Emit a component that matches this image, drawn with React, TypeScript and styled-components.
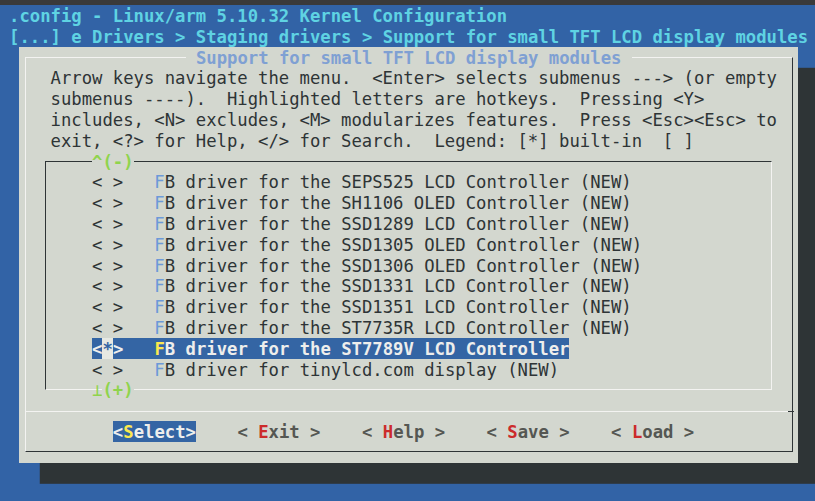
import React from 'react'
import styled, { createGlobalStyle } from 'styled-components'

// terminal cell size (80x24 grid, cropped)
const CW = 10.38
const RH = 20.8
// glyphs sit a little low in the terminal's cells
const LH = RH + 3

const BLUE = '#3263a6'
const PANEL = '#d3d7cf'
const INK = '#2e3436'
const LIGHT = '#f3f3f1'

const GlobalStyle = createGlobalStyle`
  html, body {
    margin: 0;
    padding: 0;
    background: ${BLUE};
    overflow: hidden;
  }
`

const Screen = styled.div`
  width: 815px;
  height: 501px;
  overflow: hidden;
  box-sizing: border-box;
  background: ${BLUE};
  border-top: 5.4px solid #3a3a3a;
  font-family: "DejaVu Sans Mono", monospace;
  font-size: 17.24px;
  line-height: ${LH}px;
  white-space: pre;
`

const Term = styled.div`
  margin-left: -1.3px;
`

const BackLine = styled.div`
  height: ${RH}px;
  padding-left: ${CW}px;
  color: #5fd3e3;
  font-weight: bold;
`

const Dialog = styled.div`
  position: relative;
  margin-left: ${2 * CW}px;
  width: ${75 * CW}px;
  height: ${20 * RH}px;
  background: ${PANEL};
  color: ${INK};
  box-shadow: ${2 * CW}px ${RH}px 0 #2e3436;

  &::before {
    content: '';
    position: absolute;
    left: ${CW / 2}px;
    top: ${RH / 2}px;
    width: ${74 * CW}px;
    height: ${19 * RH}px;
    box-sizing: border-box;
    border: 1px solid;
    border-color: ${LIGHT} ${INK} ${INK} ${LIGHT};
  }
`

const Row = styled.div<{ $indent?: number }>`
  position: relative;
  height: ${RH}px;
  padding-left: ${({ $indent }) => ($indent || 0) * CW}px;
`

// a run of cells with its own background, filling the whole cell height
const Cells = styled.span`
  display: inline-block;
  vertical-align: top;
  height: ${RH}px;
  line-height: ${LH}px;
`

const TitleRow = styled(Row)`
  text-align: center;
`

const Title = styled(Cells)`
  background: ${PANEL};
  color: #7fa0d3;
  font-weight: bold;
`

const MenuBox = styled.div`
  position: relative;
  margin-left: ${2 * CW}px;
  width: ${71 * CW}px;
  height: ${12 * RH}px;

  &::before {
    content: '';
    position: absolute;
    left: ${CW / 2}px;
    top: ${RH / 2}px;
    width: ${70 * CW}px;
    height: ${11 * RH}px;
    box-sizing: border-box;
    border: 1px solid;
    border-color: ${INK} ${LIGHT} ${LIGHT} ${INK};
  }
`

const Arrow = styled(Cells)<{ $cover?: boolean; $thin?: boolean }>`
  color: #8fd44c;
  font-weight: ${({ $thin }) => ($thin ? 'normal' : 'bold')};
  background: ${({ $cover }) => ($cover ? PANEL : 'transparent')};
`

const Key = styled.span`
  color: #6c99d8;
`

const Highlight = styled(Cells)`
  background: #3465a4;
  color: #eeeeec;
  font-weight: bold;
`

const HotKey = styled.span`
  color: #fce94f;
`

const Cursor = styled(Cells)`
  background: #e6e8e2;
  color: #3465a4;
`

const Separator = styled(Row)`
  &::before {
    content: '';
    position: absolute;
    left: ${CW / 2}px;
    top: ${RH / 2}px;
    width: ${74 * CW - CW / 2}px;
    height: 1px;
    background: ${LIGHT};
  }
  &::after {
    content: '';
    position: absolute;
    left: ${74 * CW}px;
    top: ${RH / 2}px;
    width: ${CW / 2 + 1}px;
    height: 1px;
    background: ${INK};
  }
`

const ButtonRow = styled(Row)`
  display: flex;
  gap: ${4 * CW}px;
`

const Button = styled(Cells)<{ $active?: boolean }>`
  font-weight: bold;
  color: ${({ $active }) => ($active ? '#eeeeec' : '#555753')};
  background: ${({ $active }) => ($active ? '#3465a4' : 'transparent')};
`

const ButtonKey = styled.span<{ $active?: boolean }>`
  color: ${({ $active }) => ($active ? '#fce94f' : '#cc2b2b')};
`

const prompt = [
  'Arrow keys navigate the menu.  <Enter> selects submenus ---> (or empty',
  'submenus ----).  Highlighted letters are hotkeys.  Pressing <Y>',
  'includes, <N> excludes, <M> modularizes features.  Press <Esc><Esc> to',
  'exit, <?> for Help, </> for Search.  Legend: [*] built-in  [ ]'
]

const items = [
  { on: false, text: 'B driver for the SEPS525 LCD Controller (NEW)' },
  { on: false, text: 'B driver for the SH1106 OLED Controller (NEW)' },
  { on: false, text: 'B driver for the SSD1289 LCD Controller (NEW)' },
  { on: false, text: 'B driver for the SSD1305 OLED Controller (NEW)' },
  { on: false, text: 'B driver for the SSD1306 OLED Controller (NEW)' },
  { on: false, text: 'B driver for the SSD1331 LCD Controller (NEW)' },
  { on: false, text: 'B driver for the SSD1351 LCD Controller (NEW)' },
  { on: false, text: 'B driver for the ST7735R LCD Controller (NEW)' },
  { on: true, text: 'B driver for the ST7789V LCD Controller' },
  { on: false, text: 'B driver for tinylcd.com display (NEW)' }
]

const buttons = [
  { pad: '', key: 'S', rest: 'elect' },
  { pad: ' ', key: 'E', rest: 'xit ' },
  { pad: ' ', key: 'H', rest: 'elp ' },
  { pad: ' ', key: 'S', rest: 'ave ' },
  { pad: ' ', key: 'L', rest: 'oad ' }
]

const MenuItem: React.FC<{ on: boolean; text: string }> = ({ on, text }) => {
  if (on) {
    return (
      <Row $indent={5}>
        <Highlight>
          {'<'}<Cursor>*</Cursor>{'>   '}<HotKey>F</HotKey>{text}
        </Highlight>
      </Row>
    )
  }
  return (
    <Row $indent={5}>
      {'< >   '}<Key>F</Key>{text}
    </Row>
  )
}

const App: React.FC = () => {
  return (
    <Screen>
      <GlobalStyle />
      <Term>
        <BackLine>.config - Linux/arm 5.10.32 Kernel Configuration</BackLine>
        <BackLine>[...] e Drivers {'>'} Staging drivers {'>'} Support for small TFT LCD display modules</BackLine>
        <Dialog>
          <TitleRow>
            <Title> Support for small TFT LCD display modules </Title>
          </TitleRow>
          {prompt.map((line) => (
            <Row key={line} $indent={3}>{line}</Row>
          ))}
          <MenuBox>
            <Row $indent={5}>
              <Arrow $cover>^(-)</Arrow>
            </Row>
            {items.map((it) => (
              <MenuItem key={it.text} on={it.on} text={it.text} />
            ))}
            <Row $indent={5}>
              <Arrow $thin>⊥</Arrow>
              <Arrow $cover>(+)</Arrow>
            </Row>
          </MenuBox>
          <Separator />
          <ButtonRow $indent={9}>
            {buttons.map((b, i) => (
              <Button key={i} $active={i === 0}>
                {'<' + b.pad}
                <ButtonKey $active={i === 0}>{b.key}</ButtonKey>
                {b.rest + '>'}
              </Button>
            ))}
          </ButtonRow>
          <Row />
        </Dialog>
      </Term>
    </Screen>
  )
}

export default App
